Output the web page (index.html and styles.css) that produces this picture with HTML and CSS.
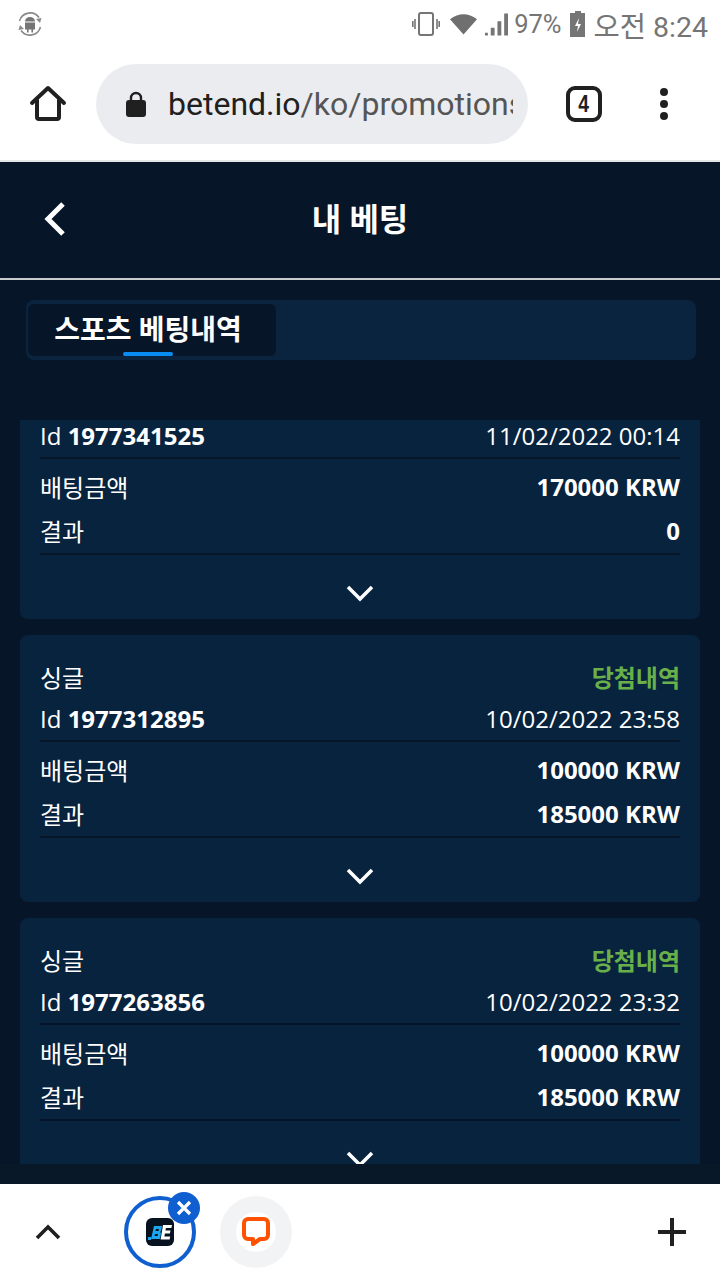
FILE: index.html
```html
<!DOCTYPE html>
<html>
  <head>
    <title>내 베팅</title>
    <link rel="stylesheet" href="styles.css">
  </head>
  <body>
    <div class="status-bar">
      <svg class="android-icon" width="28" height="28" viewBox="0 0 28 28">
        <path d="M3.5 11 A11 11 0 0 1 23 7.5 M24.5 17 A11 11 0 0 1 5 20.5" fill="none" stroke="#8a8a8a" stroke-width="1.6"/>
        <path d="M20 9 l5.5 -1 l-1.5 5 z M8 19 l-5.5 1 l1.5 -5 z" fill="#8a8a8a"/>
        <path d="M9 11.5 a5 4.5 0 0 1 10 0 z M9 12.5 h10 v7 h-2 v3 h-1.6 v-3 h-2.8 v3 h-1.6 v-3 h-2 z" fill="#757575"/>
      </svg>
      <div class="status-right">
        <svg class="vibrate" width="28" height="26" viewBox="0 0 28 26">
          <rect x="7" y="2" width="14" height="22" rx="2" fill="none" stroke="#757575" stroke-width="2"/>
          <path d="M3 8 v10 M0.8 10 v6 M25 8 v10 M27.2 10 v6" stroke="#757575" stroke-width="1.6"/>
        </svg>
        <svg class="wifi" width="27" height="22" viewBox="0 0 28 22"><path d="M0 6 Q14 -4 28 6 L14 22 z" fill="#6f6f6f"/></svg>
        <svg class="signal" width="23" height="24" viewBox="0 0 24 24"><path d="M0 21 h3 v3 h-3 z M6 16 h4 v8 h-4 z M13 9 h4 v15 h-4 z M20 1 h4 v23 h-4 z" fill="#757575"/></svg>
        <span class="status-text">97%</span>
        <svg class="battery" width="16" height="26" viewBox="0 0 16 26"><path d="M5 0 h6 v2 h4 v24 h-15 v-24 h5 z" fill="#757575"/><path d="M9 7 l-4 8 h3 l-1 6 l4 -8 h-3 z" fill="#fff"/></svg>
        <span class="status-clock">오전 8:24</span>
      </div>
    </div>

    <div class="toolbar">
      <svg class="home-icon" width="38" height="38" viewBox="0 0 38 38">
        <path d="M3 18 L19 3 L35 18 M8 15 V32 a2 2 0 0 0 2 2 H28 a2 2 0 0 0 2 -2 V15" fill="none" stroke="#202020" stroke-width="4" stroke-linecap="round" stroke-linejoin="round"/>
      </svg>
      <div class="url-box">
        <svg width="20" height="26" viewBox="0 0 20 26">
          <path d="M5 10 V7 a5 5 0 0 1 10 0 V10" fill="none" stroke="#202020" stroke-width="2.4"/>
          <rect y="9" width="20" height="17" rx="3" fill="#202020"/>
        </svg>
        <div class="url-text"><span class="url-host">betend.io</span>/ko/promotions/</div>
      </div>
      <div class="tab-count"><span>4</span></div>
      <div class="menu-dots"><i></i><i></i><i></i></div>
    </div>

    <div class="page">
      <div class="page-header">
        <svg class="back-icon" width="24" height="36" viewBox="0 0 24 36"><path d="M20 3 L5 18 L20 33" fill="none" stroke="#fff" stroke-width="5"/></svg>
        <h1>내 베팅</h1>
      </div>

      <div class="tabs">
        <div class="tab-active">스포츠 베팅내역<span class="tab-line"></span></div>
      </div>

      <div class="bet-list">
        <div class="bet-card first-card">
          <div class="bet-row id-row first-row"><span>Id <b>1977341525</b></span><span>11/02/2022 00:14</span></div>
          <div class="bet-row"><span>배팅금액</span><b>170000 KRW</b></div>
          <div class="bet-row result-row"><span>결과</span><b>0</b></div>
          <svg class="chevron" width="28" height="18" viewBox="0 0 28 18"><path d="M2 3 L14 15 L26 3" fill="none" stroke="#fff" stroke-width="3.5"/></svg>
        </div>

        <div class="bet-card">
          <div class="bet-row"><span>싱글</span><span class="won">당첨내역</span></div>
          <div class="bet-row id-row"><span>Id <b>1977312895</b></span><span>10/02/2022 23:58</span></div>
          <div class="bet-row"><span>배팅금액</span><b>100000 KRW</b></div>
          <div class="bet-row result-row"><span>결과</span><b>185000 KRW</b></div>
          <svg class="chevron" width="28" height="18" viewBox="0 0 28 18"><path d="M2 3 L14 15 L26 3" fill="none" stroke="#fff" stroke-width="3.5"/></svg>
        </div>

        <div class="bet-card">
          <div class="bet-row"><span>싱글</span><span class="won">당첨내역</span></div>
          <div class="bet-row id-row"><span>Id <b>1977263856</b></span><span>10/02/2022 23:32</span></div>
          <div class="bet-row"><span>배팅금액</span><b>100000 KRW</b></div>
          <div class="bet-row result-row"><span>결과</span><b>185000 KRW</b></div>
          <svg class="chevron" width="28" height="18" viewBox="0 0 28 18"><path d="M2 3 L14 15 L26 3" fill="none" stroke="#fff" stroke-width="3.5"/></svg>
        </div>
      </div>
      <div class="page-bottom"></div>
    </div>

    <div class="bubble-bar">
      <svg class="up-icon" width="26" height="16" viewBox="0 0 26 16"><path d="M2 14 L13 3 L24 14" fill="none" stroke="#202020" stroke-width="3.6"/></svg>
      <div class="bubble bubble-active">
        <svg width="28" height="28" viewBox="0 0 28 28">
          <rect width="28" height="28" rx="6" fill="#07111f"/>
          <rect x="2" y="19" width="3" height="3" fill="#1aa7f0"/>
          <path d="M8 8 h8 l-1 5 l-1 1 l1 1 l-1 6 h-9 z" fill="#1aa7f0"/>
          <path d="M10 11 h3 l-0.5 2 h-3 z M9 16 h3 l-0.5 2 h-3 z" fill="#07111f"/>
          <path d="M17 7 h9 l-0.6 3 h-5.5 l-0.4 2.4 h5 l-0.6 3 h-5 l-0.5 3 h5.8 l-0.6 3 h-9 z" fill="#fff"/>
        </svg>
        <div class="close-badge">
          <svg width="18" height="18" viewBox="0 0 18 18"><path d="M3 3 L15 15 M15 3 L3 15" stroke="#fff" stroke-width="3.2"/></svg>
        </div>
      </div>
      <div class="bubble bubble-chat">
        <div class="chat-inner">
          <svg width="30" height="32" viewBox="0 0 30 32">
            <path d="M7 3 H23 a4 4 0 0 1 4 4 V19 a4 4 0 0 1 -4 4 H19 L12 28 V23 H7 a4 4 0 0 1 -4 -4 V7 a4 4 0 0 1 4 -4 z" fill="none" stroke="#ff5100" stroke-width="4" stroke-linejoin="round"/>
          </svg>
        </div>
      </div>
      <svg class="plus-icon" width="30" height="30" viewBox="0 0 30 30"><path d="M15 1 V29 M1 15 H29" stroke="#202020" stroke-width="4"/></svg>
    </div>
  </body>
</html>
```

FILE: styles.css
```css
body {
  margin: 0;
  width: 720px;
  height: 1280px;
  overflow: hidden;
  display: flex;
  flex-direction: column;
  background-color: #ffffff;
  font-family: "Open Sans", "Noto Sans CJK KR", sans-serif;
}

.status-bar {
  height: 48px;
  padding: 0 12px 0 16px;
  display: flex;
  align-items: center;
  justify-content: space-between;
}

.status-right {
  display: flex;
  align-items: center;
  gap: 8px;
}

.status-text {
  font-family: Roboto, "Noto Sans CJK KR", sans-serif;
  font-size: 25.5px;
  color: #757575;
}

.status-clock {
  font-family: Roboto, "Noto Sans CJK KR", sans-serif;
  font-size: 28.5px;
  color: #757575;
}

.vibrate {
  margin-right: 2px;
}

.signal {
  margin-right: -2px;
}

.toolbar {
  height: 112px;
  display: flex;
  align-items: center;
}

.home-icon {
  margin-left: 29px;
}

.url-box {
  width: 432px;
  height: 80px;
  margin-left: 29px;
  padding: 0 15px 0 30px;
  box-sizing: border-box;
  border-radius: 40px;
  background-color: #ebecf0;
  display: flex;
  align-items: center;
  gap: 22px;
}

.url-text {
  flex: 1;
  overflow: hidden;
  white-space: nowrap;
  font-family: Roboto, sans-serif;
  font-size: 32px;
  color: #555555;
}

.url-host {
  color: #202020;
}

.tab-count {
  width: 28px;
  height: 28px;
  margin-left: 38px;
  border: 4px solid #202020;
  border-radius: 9px;
  display: flex;
  align-items: center;
  justify-content: center;
  font-family: "Liberation Sans", sans-serif;
  font-weight: bold;
  font-size: 24px;
  color: #202020;
}

.tab-count span {
  transform: scaleX(0.8);
}

.menu-dots {
  margin-left: 58px;
  display: flex;
  flex-direction: column;
  gap: 4px;
}

.menu-dots i {
  display: block;
  width: 8px;
  height: 8px;
  border-radius: 50%;
  background-color: #202020;
}

.page {
  flex: 1;
  min-height: 0;
  display: flex;
  flex-direction: column;
  border-top: 2px solid #e3e7e8;
  background-color: #061628;
}

.page-header {
  height: 118px;
  flex-shrink: 0;
  padding-bottom: 6px;
  box-sizing: border-box;
  display: flex;
  align-items: center;
  justify-content: center;
  position: relative;
  border-bottom: 2px solid #c9cccf;
}

.page-header h1 {
  margin: 0;
  font-size: 32px;
  font-weight: bold;
  color: #ffffff;
}

.back-icon {
  position: absolute;
  left: 43px;
  top: 39px;
}

.tabs {
  height: 60px;
  flex-shrink: 0;
  margin: 20px 24px 60px 26px;
  padding: 4px 2px;
  box-sizing: border-box;
  border-radius: 8px;
  background-color: #0a233f;
}

.tab-active {
  width: 248px;
  height: 52px;
  padding-right: 8px;
  border-radius: 6px;
  background-color: #061628;
  box-sizing: border-box;
  position: relative;
  text-align: center;
  font-size: 28px;
  font-weight: bold;
  line-height: 50px;
  color: #ffffff;
}

.tab-line {
  position: absolute;
  left: 95px;
  bottom: 0;
  width: 50px;
  height: 4px;
  border-radius: 2px;
  background-color: #0a8cf5;
}

.bet-list {
  height: 744px;
  flex-shrink: 0;
  overflow: hidden;
  padding: 0 20px;
}

.bet-card {
  height: 267px;
  margin-bottom: 16px;
  padding: 21px 20px 0;
  box-sizing: border-box;
  border-radius: 8px;
  background-color: #08233e;
  display: flex;
  flex-direction: column;
}

.first-card {
  height: 199px;
  padding-top: 0;
  border-radius: 0 0 8px 8px;
}

.bet-row {
  height: 42px;
  padding-bottom: 2px;
  flex-shrink: 0;
  display: flex;
  align-items: center;
  justify-content: space-between;
  box-sizing: border-box;
  font-size: 24px;
  color: #ffffff;
}

.bet-row b {
  font-weight: bold;
}

.id-row {
  height: 44px;
  margin-bottom: 7px;
  border-bottom: 2px solid #061628;
}

.first-row {
  height: 39px;
  padding-bottom: 6px;
}

.result-row {
  height: 47px;
  padding-bottom: 1px;
  border-bottom: 2px solid #061628;
}

.won {
  font-weight: bold;
  color: #6ab04a;
}

.chevron {
  align-self: center;
  margin-top: 29px;
}

.page-bottom {
  flex: 1;
  background-color: #081828;
}

.bubble-bar {
  height: 96px;
  flex-shrink: 0;
  position: relative;
  display: flex;
  align-items: center;
}

.up-icon {
  margin-left: 35px;
}

.bubble {
  width: 72px;
  height: 72px;
  box-sizing: border-box;
  border-radius: 50%;
  display: flex;
  align-items: center;
  justify-content: center;
}

.bubble-active {
  margin-left: 63px;
  border: 4px solid #0f5fd0;
  position: relative;
}

.close-badge {
  position: absolute;
  top: -8px;
  right: -8px;
  width: 32px;
  height: 32px;
  border-radius: 50%;
  background-color: #0f5fd0;
  display: flex;
  align-items: center;
  justify-content: center;
}

.bubble-chat {
  margin-left: 24px;
  background-color: #f2f3f5;
}

.chat-inner {
  width: 40px;
  height: 40px;
  border-radius: 50%;
  background-color: #ffffff;
  display: flex;
  align-items: center;
  justify-content: center;
}

.plus-icon {
  margin-left: auto;
  margin-right: 33px;
}
```
